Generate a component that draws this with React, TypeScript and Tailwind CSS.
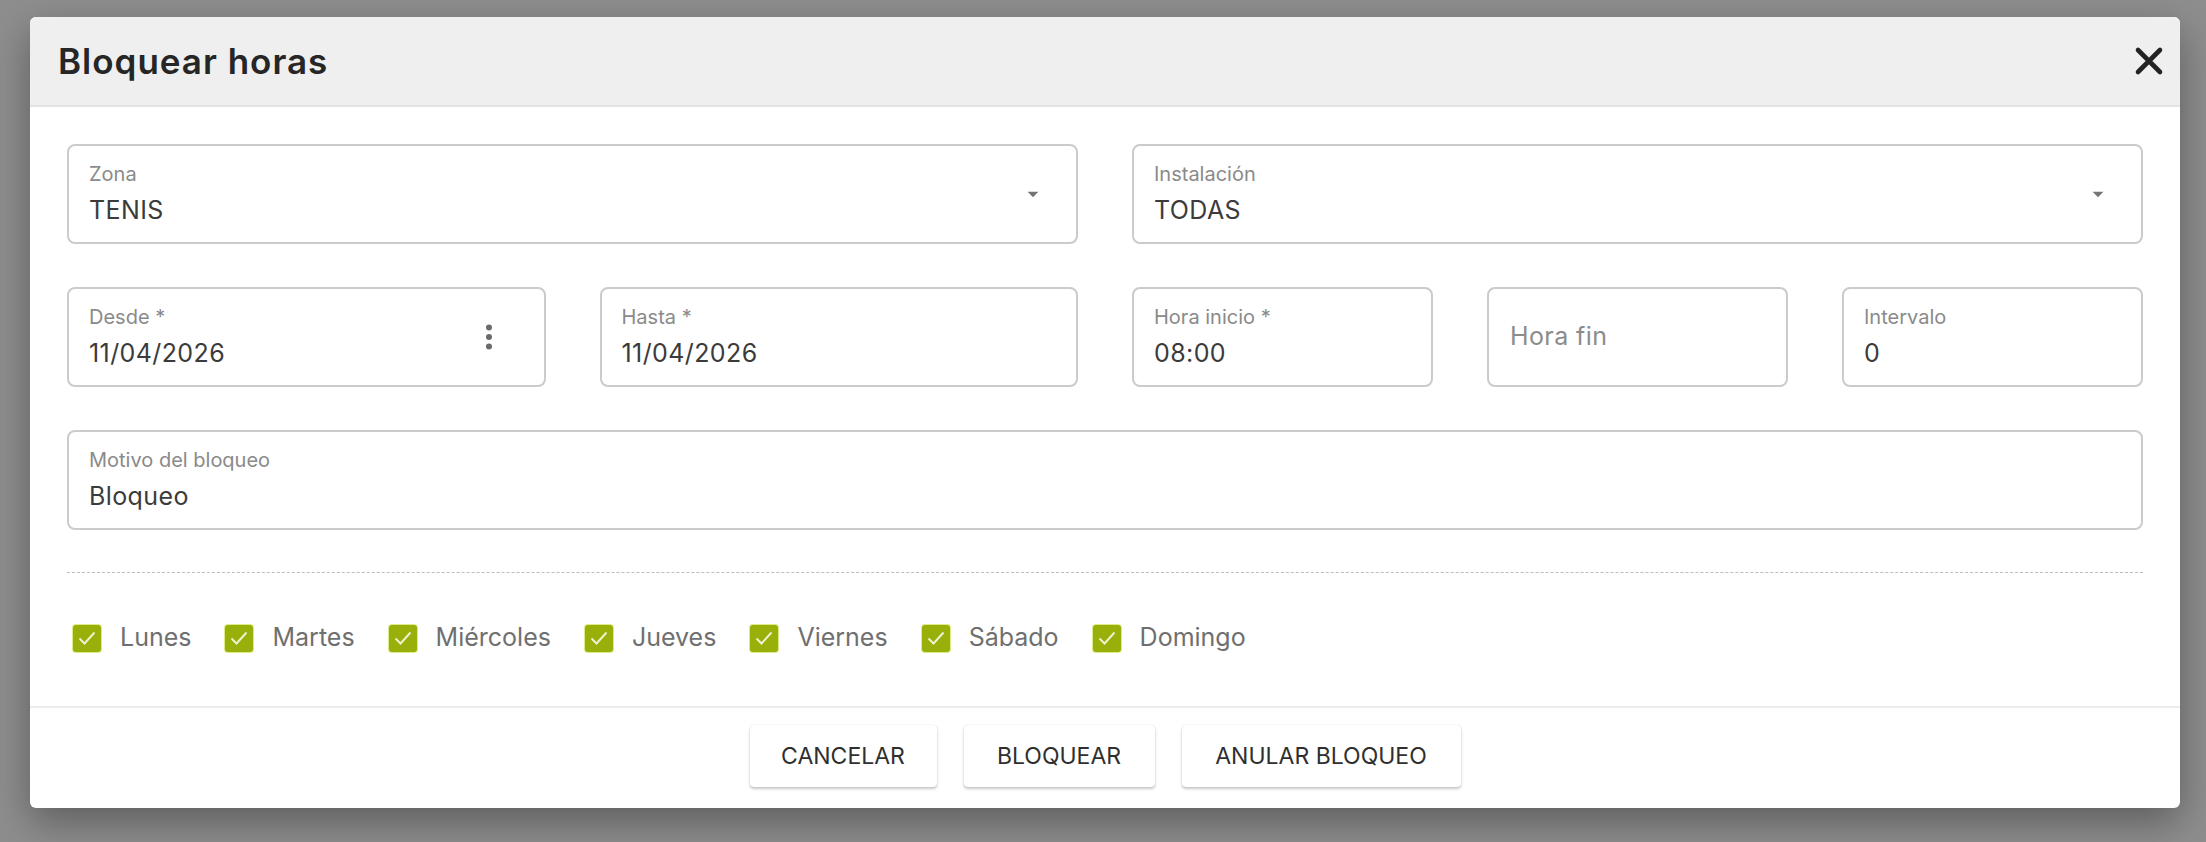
import { ReactNode } from "react";

const days = ["Lunes", "Martes", "Miércoles", "Jueves", "Viernes", "Sábado", "Domingo"];

function CloseIcon() {
  return (
    <svg width="30" height="30" viewBox="0 0 30 30" stroke="#232323" strokeWidth="4.6" strokeLinecap="round">
      <path d="M4 4l22 22M26 4L4 26" />
    </svg>
  );
}

function DropArrow() {
  return (
    <svg width="26" height="26" viewBox="0 0 24 24" fill="#757575" className="mr-[30px] shrink-0">
      <path d="M7 10l5 5 5-5z" />
    </svg>
  );
}

function MoreVert() {
  return (
    <svg width="38" height="38" viewBox="0 0 24 24" fill="#6a6a6a" className="mr-[36px] shrink-0">
      <circle cx="12" cy="6" r="1.9" />
      <circle cx="12" cy="12" r="1.9" />
      <circle cx="12" cy="18" r="1.9" />
    </svg>
  );
}

// outlined text field: small floating label above the value
function Field({
  label,
  value,
  className,
  trailing,
}: {
  label: string;
  value: string;
  className: string;
  trailing?: ReactNode;
}) {
  return (
    <div
      className={`${className} flex h-[100px] items-center rounded-lg border-2 border-[#cbcbcb] bg-white`}
    >
      <div className="flex-1 self-start pl-[20px] pt-[16px]">
        <div className="text-[20px] leading-[24px] text-[#8a8a8a]">{label}</div>
        <div className="mt-[9px] text-[25px] leading-[30px] tracking-[0.4px] text-[#3b3b3b]">{value}</div>
      </div>
      {trailing}
    </div>
  );
}

function Checkbox() {
  return (
    <span className="flex h-[27px] w-[28px] items-center justify-center rounded-[3px] bg-[#9ab00a] shadow-[0_0_0_1px_#dcec86]">
      <svg width="24" height="24" viewBox="0 0 24 24" fill="none">
        <path d="M4.5 12.5l5 5L19.5 6.5" stroke="#eef4d2" strokeWidth="1.9" />
      </svg>
    </span>
  );
}

export default function App() {
  return (
    <div className="h-[842px] overflow-hidden bg-[#8e8e8e] pt-[17px] font-['Inter','Liberation_Sans',sans-serif]">
      <div className="ml-[30px] w-[2150px] overflow-hidden rounded-md bg-white shadow-[0_14px_40px_rgba(0,0,0,0.35)]">
        {/* header */}
        <div className="flex h-[90px] items-center justify-between border-b-2 border-[#e3e3e3] bg-[#efefef] pl-[28px] pr-[16px]">
          <h1 className="text-[35px] font-semibold tracking-[1px] text-[#262626]">Bloquear horas</h1>
          <CloseIcon />
        </div>

        {/* form */}
        <div className="px-[37px] pb-[52px] pt-[37px]">
          <div className="grid grid-cols-12 gap-x-[54px] gap-y-[43px]">
            <Field className="col-span-6" label="Zona" value="TENIS" trailing={<DropArrow />} />
            <Field className="col-span-6" label="Instalación" value="TODAS" trailing={<DropArrow />} />

            <Field className="col-span-3" label="Desde *" value="11/04/2026" trailing={<MoreVert />} />
            <Field className="col-span-3" label="Hasta *" value="11/04/2026" />
            <Field className="col-span-2" label="Hora inicio *" value="08:00" />
            <div className="col-span-2 flex h-[100px] items-center rounded-lg border-2 border-[#cbcbcb] pl-[21px] text-[25px] tracking-[0.4px] text-[#8c8c8c]">
              Hora fin
            </div>
            <Field className="col-span-2" label="Intervalo" value="0" />

            <Field className="col-span-12" label="Motivo del bloqueo" value="Bloqueo" />
          </div>

          <div className="mt-[42px] border-t border-dashed border-[#bdbdbd]" />

          <div className="mt-[49px] flex h-[32px] items-center gap-[34px] pl-[6px]">
            {days.map((d) => (
              <label key={d} className="flex items-center gap-[19px]">
                <Checkbox />
                <span className="text-[25px] text-[#6f6f6f]">{d}</span>
              </label>
            ))}
          </div>
        </div>

        {/* actions */}
        <div className="flex h-[102px] items-center justify-center gap-[27px] border-t-2 border-[#ececec] pb-[4px]">
          <button className="h-[62px] w-[187px] rounded bg-white text-[23px] text-[#2f2f2f] shadow-[0_2px_3px_rgba(0,0,0,0.22),0_0_1px_rgba(0,0,0,0.2)]">
            CANCELAR
          </button>
          <button className="h-[62px] w-[191px] rounded bg-white text-[23px] text-[#2f2f2f] shadow-[0_2px_3px_rgba(0,0,0,0.22),0_0_1px_rgba(0,0,0,0.2)]">
            BLOQUEAR
          </button>
          <button className="h-[62px] w-[279px] rounded bg-white text-[23px] text-[#2f2f2f] shadow-[0_2px_3px_rgba(0,0,0,0.22),0_0_1px_rgba(0,0,0,0.2)]">
            ANULAR BLOQUEO
          </button>
        </div>
      </div>
    </div>
  );
}
